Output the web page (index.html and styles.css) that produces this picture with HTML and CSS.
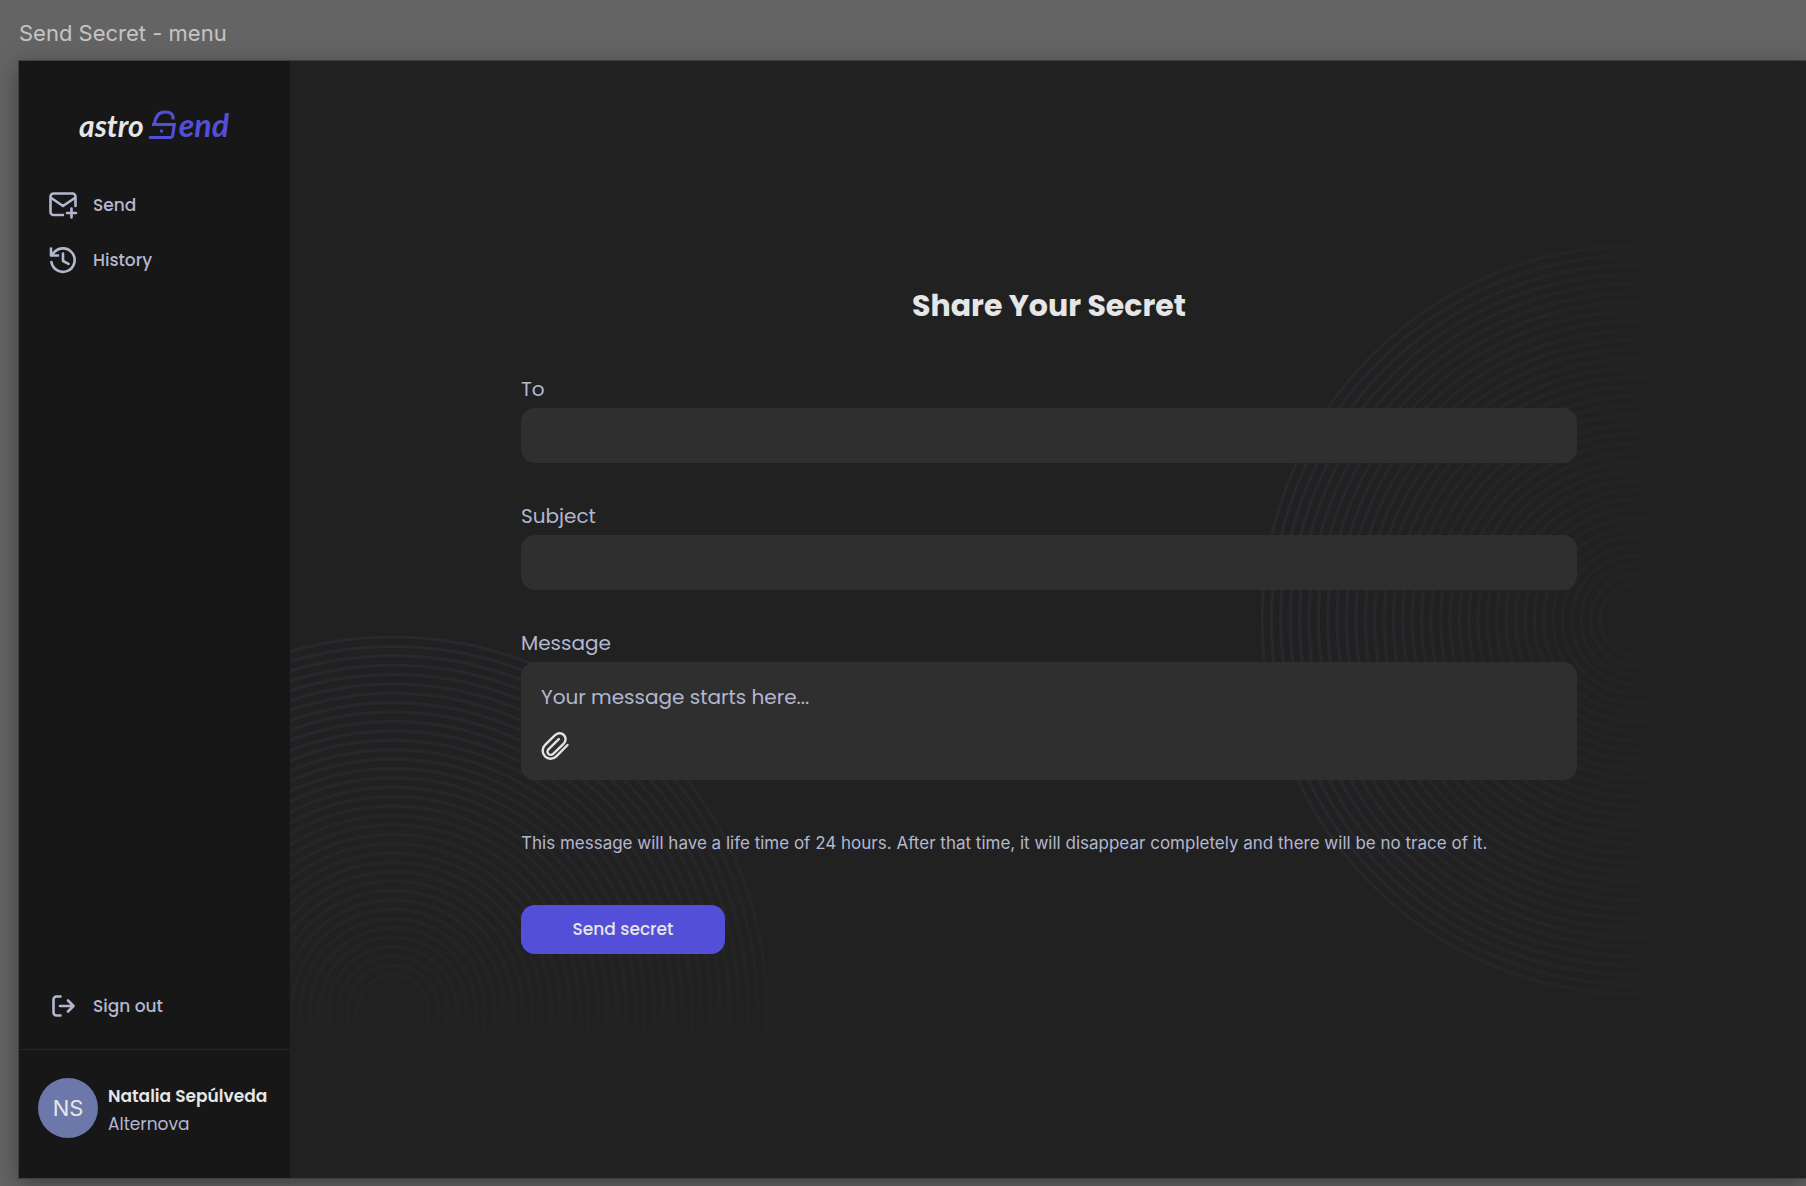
FILE: index.html
```html
<!DOCTYPE html>
<html lang="en">
<head>
<meta charset="utf-8">
<meta name="viewport" content="width=device-width, initial-scale=1">
<title>Send Secret - menu</title>
<link rel="stylesheet" href="styles.css">
</head>
<body>
<svg width="0" height="0" class="defs" aria-hidden="true">
  <defs>
    <linearGradient id="fade" gradientUnits="userSpaceOnUse" x1="0" y1="-375" x2="0" y2="48">
      <stop offset="0" stop-color="#28282f"/>
      <stop offset=".4" stop-color="#26262b" stop-opacity=".95"/>
      <stop offset=".75" stop-color="#242626" stop-opacity=".8"/>
      <stop offset="1" stop-color="#232424" stop-opacity=".2"/>
      <stop offset="1" stop-color="#232424" stop-opacity="0"/>
    </linearGradient>
    <g id="rings" fill="none" stroke="url(#fade)" stroke-width="3">
      <circle r="374"/><circle r="364.6"/><circle r="355.2"/><circle r="345.8"/><circle r="336.4"/><circle r="327"/>
      <circle r="317.7"/><circle r="308.3"/><circle r="298.9"/><circle r="289.5"/><circle r="280.1"/><circle r="270.7"/>
      <circle r="261.3"/><circle r="251.9"/><circle r="242.6"/><circle r="233.2"/><circle r="223.8"/><circle r="214.4"/>
      <circle r="205"/><circle r="195.6"/><circle r="186.2"/><circle r="176.8"/><circle r="167.4"/><circle r="158.1"/>
      <circle r="148.7"/><circle r="139.3"/><circle r="129.9"/><circle r="120.5"/><circle r="111.1"/><circle r="101.7"/>
      <circle r="92.3"/><circle r="82.9"/><circle r="73.6"/><circle r="64.2"/><circle r="54.8"/><circle r="45.4"/><circle r="36"/>
    </g>
  </defs>
</svg>

<header class="caption">Send Secret - menu</header>

<div class="frame">
  <aside class="sidebar">
    <a class="logo" href="#" aria-label="astro Send">
      <span class="logo-astro">astro</span>
      <svg class="logo-lock" width="29" height="32" viewBox="0 0 29 32" fill="none" stroke="#534fd8" stroke-width="3" aria-hidden="true">
        <path d="M6.500 15C7.500 7.500 10.500 3 17 3c6 0 8.600 2.500 8 7.500"/>
        <path d="M4 15.500H26.300L24.800 26c-.3 1.900-.8 2.500-2.500 2.500H1"/>
        <circle cx="13.500" cy="22" r="1.700" fill="#534fd8" stroke="none"/>
      </svg>
      <span class="logo-end">end</span>
    </a>
    <nav class="nav">
      <a class="nav-link" href="#">
        <svg class="icon" viewBox="0 0 30 30" aria-hidden="true"><path d="M15 25H5.500a3 3 0 0 1-3-3V6.500a3 3 0 0 1 3-3h19a3 3 0 0 1 3 3V16M2.500 7.500 15 16 27.500 7.500M23.500 18.500v9M19 23h9"/></svg>
        <span>Send</span>
      </a>
      <a class="nav-link" href="#">
        <svg class="icon" viewBox="0 0 30 30" aria-hidden="true"><path d="M3.400 17A11.700 11.700 0 1 0 5.800 7.800L3 10.500M3 3.500v7h7M15 8.500V16l5.500 2.800"/></svg>
        <span>History</span>
      </a>
    </nav>
    <a class="nav-link sign-out" href="#">
      <svg class="icon" viewBox="0 0 30 30" aria-hidden="true"><path d="M12.500 5.500H8.500a3 3 0 0 0-3 3v13a3 3 0 0 0 3 3h4M12 15h13M20 9.500l5.500 5.500-5.500 5.500"/></svg>
      <span>Sign out</span>
    </a>
    <div class="profile">
      <span class="avatar">NS</span>
      <div class="who">
        <strong class="name">Natalia Sepúlveda</strong>
        <span class="company">Alternova</span>
      </div>
    </div>
  </aside>

  <main class="main">
    <svg class="rings rings-right" viewBox="-375 -375 750 750" aria-hidden="true"><use href="#rings" transform="rotate(-90)"/></svg>
    <svg class="rings rings-left" viewBox="-375 -375 750 750" aria-hidden="true"><use href="#rings"/></svg>
    <form class="form">
      <h1 class="title">Share Your Secret</h1>
      <div class="field">
        <label class="label" for="to">To</label>
        <input class="input" id="to" type="text">
      </div>
      <div class="field">
        <label class="label" for="subject">Subject</label>
        <input class="input" id="subject" type="text">
      </div>
      <div class="field">
        <label class="label" for="message">Message</label>
        <div class="message-box">
          <textarea class="message" id="message" rows="1" placeholder="Your message starts here..."></textarea>
          <button class="attach" type="button" aria-label="Attach a file">
            <svg width="28" height="28" viewBox="0 0 28 28" fill="none" stroke="#e4e4e4" stroke-width="2.400" stroke-linecap="round" stroke-linejoin="round" aria-hidden="true"><path d="M26.500 13 15.300 24.300A7.900 7.900 0 0 1 3.900 13.200L14 3.200A5.600 5.600 0 0 1 23 11.300L12.200 21.900A3.300 3.300 0 0 1 7.400 17.300L17.800 7.100"/></svg>
          </button>
        </div>
      </div>
      <p class="note">This message will have a life time of 24 hours. After that time, it will disappear completely and there will be no trace of it.</p>
      <button class="submit" type="submit">Send secret</button>
    </form>
  </main>
</div>
</body>
</html>
```
FILE: styles.css
```css
* { box-sizing: border-box; }

body {
  margin: 0;
  min-height: 100vh;
  padding: 0 0 8px 19px;
  display: flex;
  flex-direction: column;
  overflow-x: hidden;
  background: #646464;
  color: #b4b7d0;
  font-family: Poppins, Inter, "Open Sans", sans-serif;
  font-size: 17px;
}

.defs { position: absolute; }

.caption {
  height: 61px;
  padding-top: 18px;
  color: #c4c4c4;
  font-family: Inter, sans-serif;
  font-size: 22px;
  line-height: 30px;
}

.frame {
  flex: 1;
  display: flex;
  background: #212121;
  box-shadow: 0 0 0 1px #404040, 0 6px 24px rgba(0, 0, 0, 0.4);
}

.sidebar {
  width: 271px;
  flex: none;
  display: flex;
  flex-direction: column;
  background: #171717;
}

.logo {
  display: flex;
  align-items: flex-end;
  height: 32px;
  margin: 48px 0 36px 60px;
  font-family: Lato, sans-serif;
  font-style: italic;
  font-size: 30px;
  line-height: 32px;
  text-decoration: none;
}

.logo-astro { color: #e6e6e6; font-weight: 700; }
.logo-lock { margin: 0 2px 0 4px; }
.logo-end { color: #534fd8; font-size: 32px; font-weight: 700; }

.nav { flex: 1; }

.nav-link {
  display: flex;
  align-items: center;
  gap: 15px;
  height: 55px;
  padding-left: 29px;
  color: #b4b7d0;
  font-weight: 500;
  text-decoration: none;
}

.icon {
  width: 30px;
  height: 30px;
  fill: none;
  stroke: #b4b7d0;
  stroke-width: 2.6;
  stroke-linecap: round;
  stroke-linejoin: round;
}

.sign-out { margin-bottom: 16px; }

.profile {
  display: flex;
  align-items: center;
  gap: 10px;
  padding: 28px 16px 40px 19px;
  border-top: 1px solid #262626;
}

.avatar {
  display: grid;
  place-items: center;
  flex: none;
  width: 60px;
  height: 60px;
  border-radius: 50%;
  background: #6c78a9;
  color: #e6e6e6;
  font-family: Inter, sans-serif;
  font-size: 22px;
}

.who {
  display: flex;
  flex-direction: column;
  padding-top: 4px;
  line-height: 28px;
  white-space: nowrap;
}

.name { color: #e6e6e6; font-weight: 600; }

.main {
  position: relative;
  flex: 1;
  min-width: 0;
  display: flex;
  align-items: center;
  justify-content: center;
  padding: 24px 24px 24px 26px;
  overflow: hidden;
}

.rings {
  position: absolute;
  width: 750px;
  height: 750px;
}

.rings-right { right: -205px; top: calc(50% - 375px); }
.rings-left { left: -272px; bottom: -208px; }

.form {
  position: relative;
  width: 100%;
  max-width: 1056px;
}

.title {
  margin: 0 0 48px;
  color: #e6e6e6;
  font-size: 30px;
  font-weight: 700;
  line-height: 40px;
  text-align: center;
}

.field {
  display: flex;
  flex-direction: column;
  gap: 4px;
  margin-bottom: 38px;
}

.label {
  font-size: 20px;
  line-height: 30px;
}

.input {
  width: 100%;
  height: 55px;
  padding: 0 20px;
  border: 0;
  border-radius: 14px;
  background: #2f2f2f;
  color: inherit;
  font: inherit;
}

.message-box {
  display: flex;
  flex-direction: column;
  align-items: flex-start;
  gap: 20px;
  padding: 20px;
  border-radius: 14px;
  background: #2f2f2f;
}

.message {
  display: block;
  width: 100%;
  height: 30px;
  padding: 0;
  border: 0;
  resize: none;
  overflow: hidden;
  background: none;
  color: inherit;
  font: inherit;
  font-size: 20px;
  line-height: 30px;
}

.message::placeholder { color: #b4b7d0; opacity: 1; }

.attach {
  display: block;
  height: 28px;
  padding: 0;
  border: 0;
  background: none;
}

.note {
  margin: 50px 0 49px;
  font-family: Inter, sans-serif;
  line-height: 26px;
}

.submit {
  width: 204px;
  height: 49px;
  padding: 0;
  border: 0;
  border-radius: 14px;
  background: #534fd8;
  color: #e6e6e6;
  font: inherit;
  font-weight: 500;
}
```
